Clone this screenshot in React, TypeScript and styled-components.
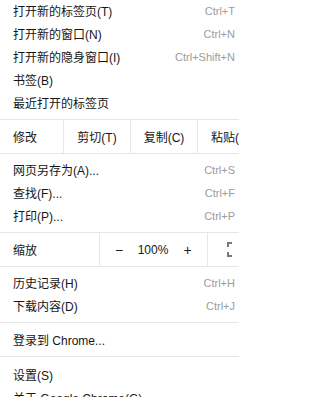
import React from "react";
import styled, { createGlobalStyle } from "styled-components";

const GlobalStyle = createGlobalStyle`
  html, body {
    margin: 0;
    padding: 0;
    background: #ffffff;
    overflow: hidden;
  }
  * { box-sizing: border-box; }
`;

const Menu = styled.div`
  width: 239px;
  height: 397px;
  overflow: hidden;
  background: #ffffff;
  font-family: "Liberation Sans", "Noto Sans CJK SC", sans-serif;
  font-size: 12px;
  color: #161616;
  display: flex;
  flex-direction: column;
`;

const Group = styled.div<{ $top: number; $bottom: number; $last?: boolean }>`
  display: flex;
  flex-direction: column;
  padding-top: ${(p) => p.$top}px;
  padding-bottom: ${(p) => p.$bottom}px;
  border-bottom: ${(p) => (p.$last ? "none" : "1px solid #e6e6e6")};
  flex-shrink: 0;
`;

const Item = styled.div`
  height: 23px;
  display: flex;
  align-items: center;
  justify-content: space-between;
  padding: 0 4px 0 13px;
  white-space: nowrap;
  line-height: 1;
`;

const Shortcut = styled.span`
  font-family: "Liberation Sans", sans-serif;
  font-size: 11px;
  color: #9c9c9c;
`;

const ControlRow = styled.div`
  height: 34px;
  display: flex;
  align-items: stretch;
  border-bottom: 1px solid #e6e6e6;
  flex-shrink: 0;
  white-space: nowrap;
`;

const RowLabel = styled.div<{ $w: number }>`
  width: ${(p) => p.$w}px;
  flex-shrink: 0;
  display: flex;
  align-items: center;
  padding-left: 13px;
`;

const EditButton = styled.div`
  width: 67px;
  flex-shrink: 0;
  display: flex;
  align-items: center;
  justify-content: center;
  border-left: 1px solid #e6e6e6;
`;

const ZoomControls = styled.div`
  display: flex;
  align-items: stretch;
  border-left: 1px solid #e6e6e6;
  border-right: 1px solid #e6e6e6;
  flex-shrink: 0;
`;

const ZoomButton = styled.div<{ $w: number }>`
  width: ${(p) => p.$w}px;
  display: flex;
  align-items: center;
  justify-content: center;
  font-size: 14px;
  color: #222;
`;

const ZoomValue = styled.div`
  width: 30px;
  display: flex;
  align-items: center;
  justify-content: center;
  font-size: 12px;
`;

const FullscreenCell = styled.div`
  display: flex;
  align-items: center;
  padding-left: 19px;
  flex-shrink: 0;
`;

const FullscreenIcon = () => (
  <svg width="20" height="15" viewBox="0 0 20 15" fill="none">
    <path
      d="M1 5V1H5M15 1H19V5M19 10V14H15M5 14H1V10"
      stroke="#7a7a7a"
      strokeWidth="2"
    />
  </svg>
);

type Entry = { label: string; shortcut?: string };

const group1: Entry[] = [
  { label: "打开新的标签页(T)", shortcut: "Ctrl+T" },
  { label: "打开新的窗口(N)", shortcut: "Ctrl+N" },
  { label: "打开新的隐身窗口(I)", shortcut: "Ctrl+Shift+N" },
  { label: "书签(B)" },
  { label: "最近打开的标签页" },
];

const group2: Entry[] = [
  { label: "网页另存为(A)...", shortcut: "Ctrl+S" },
  { label: "查找(F)...", shortcut: "Ctrl+F" },
  { label: "打印(P)...", shortcut: "Ctrl+P" },
];

const group3: Entry[] = [
  { label: "历史记录(H)", shortcut: "Ctrl+H" },
  { label: "下载内容(D)", shortcut: "Ctrl+J" },
];

const group4: Entry[] = [{ label: "登录到 Chrome..." }];

const group5: Entry[] = [
  { label: "设置(S)" },
  { label: "关于 Google Chrome(G)" },
];

const Items = ({ items }: { items: Entry[] }) => (
  <>
    {items.map((it) => (
      <Item key={it.label}>
        <span>{it.label}</span>
        {it.shortcut && <Shortcut>{it.shortcut}</Shortcut>}
      </Item>
    ))}
  </>
);

export default function App() {
  return (
    <>
      <GlobalStyle />
      <Menu>
        <Group $top={0} $bottom={4}>
          <Items items={group1} />
        </Group>
        <ControlRow>
          <RowLabel $w={63}>修改</RowLabel>
          <EditButton>剪切(T)</EditButton>
          <EditButton>复制(C)</EditButton>
          <EditButton>粘贴(V)</EditButton>
        </ControlRow>
        <Group $top={5} $bottom={4}>
          <Items items={group2} />
        </Group>
        <ControlRow>
          <RowLabel $w={99}>缩放</RowLabel>
          <ZoomControls>
            <ZoomButton $w={38}>−</ZoomButton>
            <ZoomValue>100%</ZoomValue>
            <ZoomButton $w={39}>+</ZoomButton>
          </ZoomControls>
          <FullscreenCell>
            <FullscreenIcon />
          </FullscreenCell>
        </ControlRow>
        <Group $top={5} $bottom={4}>
          <Items items={group3} />
        </Group>
        <Group $top={6} $bottom={4}>
          <Items items={group4} />
        </Group>
        <Group $top={7} $bottom={0} $last>
          <Items items={group5} />
        </Group>
      </Menu>
    </>
  );
}
